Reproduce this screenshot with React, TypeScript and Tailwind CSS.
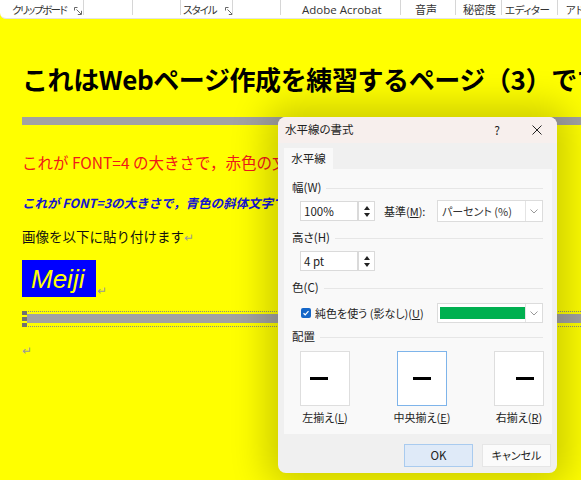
import React from "react";

function Launcher() {
  return (
    <svg width="8" height="8" viewBox="0 0 8 8" className="ml-[8px] mt-[2px] shrink-0">
      <path d="M0.5 3.5V0.5H3.5" fill="none" stroke="#666" strokeWidth="1" />
      <path d="M2.5 2.5L7 7" stroke="#666" strokeWidth="1" />
      <path d="M7.5 3.8V7.5H3.8" fill="none" stroke="#666" strokeWidth="1" />
    </svg>
  );
}

function Sep() {
  return <div className="w-px h-[15px] bg-[#d6d6d6] self-start shrink-0" />;
}

function Spinner() {
  return (
    <div className="w-[17px] h-[20px] border border-[#dadada] bg-white flex flex-col items-center justify-center gap-[3px]">
      <svg width="6" height="4" viewBox="0 0 6 4"><path d="M3 0L6 4H0Z" fill="#222" /></svg>
      <svg width="6" height="4" viewBox="0 0 6 4"><path d="M0 0H6L3 4Z" fill="#222" /></svg>
    </div>
  );
}

function Chevron() {
  return (
    <div className="w-[17px] h-full border-l border-[#e4e4e4] flex items-center justify-center shrink-0">
      <svg width="8" height="5" viewBox="0 0 8 5"><path d="M0.5 0.5L4 4L7.5 0.5" fill="none" stroke="#999" strokeWidth="1" /></svg>
    </div>
  );
}

function GroupLabel({ children }: { children: React.ReactNode }) {
  return (
    <div className="flex items-center h-[16px] pl-[8px] pr-[9px]">
      <span className="text-[11.5px] text-[#222] whitespace-nowrap">{children}</span>
      <div className="flex-1 h-px bg-[#e6e6e6] ml-[5px]" />
    </div>
  );
}

function AlignBox({ pos, label, selected }: { pos: "left" | "center" | "right"; label: React.ReactNode; selected?: boolean }) {
  const just = pos === "left" ? "justify-start pl-[9px]" : pos === "right" ? "justify-end pr-[9px]" : "justify-center";
  return (
    <div className="w-[50px] flex flex-col items-center">
      <div className={`w-[50px] h-[55px] bg-white border flex items-center ${just} ${selected ? "border-[#7eb4ea]" : "border-[#dedede]"}`}>
        <div className="w-[18px] h-[3px] bg-black" />
      </div>
      <div className="mt-[4px] text-[11px] leading-[14px] text-[#222] whitespace-nowrap">{label}</div>
    </div>
  );
}

export default function App() {
  return (
    <div className="relative w-[581px] h-[480px] overflow-hidden bg-[#ffff00] font-['Noto_Sans_CJK_JP',sans-serif]">
      {/* ribbon */}
      <div className="h-[19px] bg-white border-b border-[#e3e3e3] rounded-bl-[6px] flex items-start text-[10.5px] leading-[19px] text-[#333] whitespace-nowrap [font-feature-settings:'palt']">
        <div className="w-[83px] shrink-0 flex items-center pl-[12px]"><span className="tracking-[-1.5px]">クリップボード</span><Launcher /></div>
        <Sep />
        <div className="w-[48px] shrink-0" />
        <Sep />
        <div className="w-[47px] shrink-0" />
        <Sep />
        <div className="w-[51px] shrink-0 flex items-center pl-[2px]"><span className="tracking-[-1px]">スタイル</span><Launcher /></div>
        <Sep />
        <div className="w-[47px] shrink-0" />
        <Sep />
        <div className="w-[119px] shrink-0 pl-[21px] font-['Open_Sans','Noto_Sans_CJK_JP',sans-serif] text-[11.5px]">Adobe Acrobat</div>
        <Sep />
        <div className="w-[54px] shrink-0 pl-[14px] text-[11px]">音声</div>
        <Sep />
        <div className="w-[45px] shrink-0 pl-[7px] text-[11px]">秘密度</div>
        <Sep />
        <div className="w-[55px] shrink-0 pl-[3px] tracking-[-0.5px]">エディター</div>
        <Sep />
        <div className="shrink-0 pl-[8px]">アド</div>
      </div>

      {/* document */}
      <div className="pl-[22px]">
        <div className="mt-[42px] h-[36px] leading-[36px] text-[26px] font-bold text-black whitespace-nowrap tracking-[-0.4px]">
          これはWebページ作成を練習するページ（3）です
        </div>
        <div className="mt-[20px] h-[8px] bg-[#a2a2a2]" />
        <div className="mt-[25px] h-[24px] leading-[24px] text-[15.5px] text-[#f01818] whitespace-nowrap">
          これが FONT=4 の大きさで，赤色の文字です。
        </div>
        <div className="mt-[19px] h-[20px] leading-[20px] text-[12.5px] font-bold italic text-[#1414d0] whitespace-nowrap">
          これが FONT=3の大きさで，青色の斜体文字です。
        </div>
        <div className="mt-[13px] h-[20px] leading-[20px] text-[13.5px] text-[#111] whitespace-nowrap">
          画像を以下に貼り付けます<span className="text-[#9a9a9a] text-[12px]">↵</span>
        </div>
        <div className="mt-[14px] flex items-end">
          <div className="w-[74px] h-[37px] bg-[#0000ff] flex items-center pl-[9px]">
            <span className="font-['Liberation_Sans',sans-serif] italic text-[26px] leading-[30px] text-[#ffff00]">Meiji</span>
          </div>
          <span className="text-[#9a9a9a] text-[12px] leading-[14px] ml-[1px]">↵</span>
        </div>
        <div className="relative mt-[14px] h-[16px] border-y border-dotted border-[#8a8a8a]">
          <div className="absolute left-0 top-[-1px] w-[5px] h-[4px] bg-[#707070]" />
          <div className="absolute left-0 top-[5px] w-[5px] h-[4px] bg-[#707070]" />
          <div className="absolute left-0 top-[11px] w-[5px] h-[4px] bg-[#707070]" />
          <div className="ml-[5px] mt-[2px] h-[9px] bg-[#a2a2a2]" />
        </div>
        <div className="mt-[15px] h-[16px] leading-[16px] text-[12px] text-[#9a9a9a]">↵</div>
      </div>

      {/* dialog */}
      <div className="absolute left-[278px] top-[117px] w-[279px] h-[356px] rounded-[8px] bg-[#f0f0f0] overflow-hidden shadow-[0_0_36px_12px_rgba(0,0,0,0.2)] text-[#222] [font-feature-settings:'palt']">
        <div className="h-[26px] bg-[#f7efed] flex items-center pl-[7px] text-[11.5px]">
          <span className="flex-1">水平線の書式</span>
          <span className="w-[10px] text-center mr-[30px] text-[12px]">?</span>
          <svg width="10" height="10" viewBox="0 0 10 10" className="mr-[15px]"><path d="M0.5 0.5L9.5 9.5M9.5 0.5L0.5 9.5" stroke="#222" strokeWidth="1" /></svg>
        </div>
        <div className="pl-[6px] pt-[5px]">
          <div className="w-[49px] h-[21px] bg-[#f9f9f9] flex items-center justify-center text-[11.5px]">水平線</div>
          <div className="w-[268px] h-[265px] bg-[#f9f9f9] pt-[11px]">
            <GroupLabel>幅(W)</GroupLabel>
            <div className="mt-[4px] flex items-center ml-[16px] h-[22px]">
              <div className="w-[58px] h-[20px] bg-white border border-[#dadada] text-[11.5px] leading-[18px] pl-[3px]">100%</div>
              <Spinner />
              <div className="w-[53px] ml-[9px] text-[11px] whitespace-nowrap">基準(<span className="underline">M</span>):</div>
              <div className="w-[106px] h-[22px] bg-white border border-[#dcdcdc] flex items-center">
                <span className="flex-1 pl-[4px] text-[11px] text-[#333] whitespace-nowrap">パーセント (%)</span>
                <Chevron />
              </div>
            </div>
            <div className="mt-[8px]"><GroupLabel>高さ(H)</GroupLabel></div>
            <div className="mt-[5px] flex items-center ml-[16px]">
              <div className="w-[58px] h-[20px] bg-white border border-[#dadada] text-[11.5px] leading-[18px] pl-[3px]">4 pt</div>
              <Spinner />
            </div>
            <div className="mt-[9px]"><GroupLabel>色(C)</GroupLabel></div>
            <div className="mt-[7px] flex items-center ml-[17px] h-[20px]">
              <div className="w-[10px] h-[10px] rounded-[2px] bg-[#1466c8] flex items-center justify-center shrink-0">
                <svg width="8" height="8" viewBox="0 0 8 8"><path d="M1.5 4.2L3.2 5.8L6.5 2.2" fill="none" stroke="white" strokeWidth="1.2" /></svg>
              </div>
              <div className="w-[126px] shrink-0 pl-[4px] text-[11px] whitespace-nowrap">純色を使う (影なし)(<span className="underline">U</span>)</div>
              <div className="w-[106px] h-[20px] bg-white border border-[#dcdcdc] flex items-center">
                <div className="ml-[2px] w-[85px] h-[12px] bg-[#00b050]" />
                <div className="flex-1" />
                <Chevron />
              </div>
            </div>
            <div className="mt-[6px]"><GroupLabel>配置</GroupLabel></div>
            <div className="mt-[6px] ml-[16px] flex gap-[47px]">
              <AlignBox pos="left" label={<>左揃え(<span className="underline">L</span>)</>} />
              <AlignBox pos="center" selected label={<>中央揃え(<span className="underline">E</span>)</>} />
              <AlignBox pos="right" label={<>右揃え(<span className="underline">R</span>)</>} />
            </div>
          </div>
          <div className="mt-[10px] flex justify-end gap-[9px] pr-[6px]">
            <div className="w-[69px] h-[23px] bg-[#dfeaf8] border border-[#a9cbef] flex items-center justify-center text-[11.5px]">OK</div>
            <div className="w-[69px] h-[23px] bg-[#fbfbfb] border border-[#e6e6e6] flex items-center justify-center text-[11px]">キャンセル</div>
          </div>
        </div>
      </div>
    </div>
  );
}
